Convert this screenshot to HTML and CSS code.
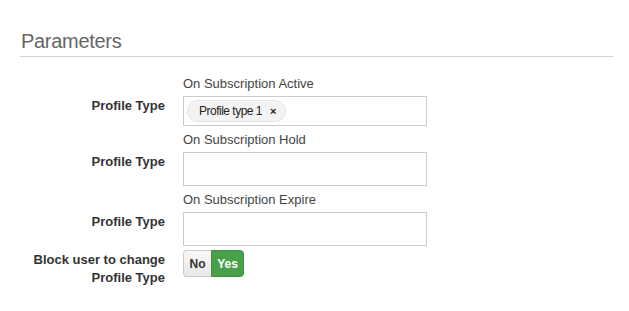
FILE: index.html
```html
<!DOCTYPE html>
<html lang="en">
<head>
  <meta charset="UTF-8" />
  <title>Parameters</title>
  <link rel="stylesheet" href="styles.css">
</head>

<body>

  <div class="panel">
    <div class="legend">Parameters</div>

    <div class="form">
      <!-- Active -->
      <div class="caption">On Subscription Active</div>
      <div class="label">Profile Type</div>
      <div class="select select-short">
        <span class="tag">Profile type 1 <span class="tag-remove">&times;</span></span>
      </div>

      <!-- Hold -->
      <div class="caption">On Subscription Hold</div>
      <div class="label">Profile Type</div>
      <div class="select"></div>

      <!-- Expire -->
      <div class="caption">On Subscription Expire</div>
      <div class="label">Profile Type</div>
      <div class="select"></div>

      <!-- Block -->
      <div class="label">Block user to change<br>Profile Type</div>
      <div class="toggle">
        <span class="toggle-no">No</span>
        <span class="toggle-yes">Yes</span>
      </div>
    </div>
  </div>

</body>
</html>
```

FILE: styles.css
```css
body {
  margin: 0;
  font-family: "Liberation Sans", Arial, sans-serif;
  font-size: 13px;
  color: #333;
  background: #fff;
}

.panel {
  padding: 27px 16px 0 20px;
}

.legend {
  font-size: 20px;
  letter-spacing: -0.3px;
  line-height: 29px;
  color: #666;
  padding-left: 1px;
  border-bottom: 1px solid #d2d2d2;
}

.form {
  display: grid;
  grid-template-columns: 145px 244px;
  column-gap: 18px;
  row-gap: 4px;
  margin-top: 17px;
}

.caption {
  grid-column: 2;
  line-height: 18px;
  padding-top: 1px;
  margin-bottom: -1px;
  color: #444;
}

.label {
  grid-column: 1;
  text-align: right;
  font-weight: bold;
  line-height: 18px;
  padding-top: 1px;
}

.select {
  grid-column: 2;
  height: 34px;
  box-sizing: border-box;
  border: 1px solid #ccc;
  background: #fff;
}

.select-short {
  height: 30px;
  padding: 3px;
}

.tag {
  display: inline-flex;
  align-items: center;
  height: 22px;
  box-sizing: border-box;
  padding: 0 9px 0 11px;
  border: 1px solid #e6e6e6;
  border-radius: 11px;
  background: #f3f3f3;
  font-size: 12px;
  letter-spacing: -0.5px;
  color: #222;
}

.tag-remove {
  margin-left: 8px;
  font-weight: bold;
  font-size: 11px;
  letter-spacing: 0;
}

.toggle {
  grid-column: 2;
  display: flex;
  width: 61px;
  height: 27px;
  font-size: 12px;
  font-weight: bold;
}

.toggle span {
  display: flex;
  align-items: center;
  justify-content: center;
  box-sizing: border-box;
}

.toggle-no {
  width: 28px;
  border: 1px solid #ccc;
  border-right: none;
  border-radius: 4px 0 0 4px;
  background: linear-gradient(#f8f8f8, #e8e8e8);
  color: #333;
}

.toggle-yes {
  width: 33px;
  border: 1px solid #3f8f3f;
  border-radius: 0 4px 4px 0;
  background: #4a9f4a;
  color: #fff;
}
```
